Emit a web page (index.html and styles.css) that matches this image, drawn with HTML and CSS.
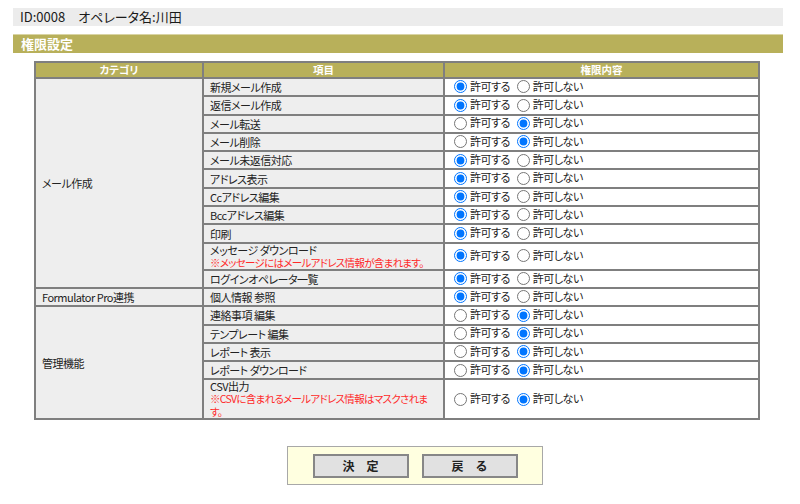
FILE: index.html
```html
<!DOCTYPE html>
<html lang="ja">
<head>
<meta charset="utf-8">
<title>権限設定</title>
<link rel="stylesheet" href="styles.css">
</head>
<body>
<div class="page">
  <div class="opbar">ID:0008　オペレータ名:川田</div>
  <h2 class="section">権限設定</h2>
  <table class="perm">
    <colgroup><col class="c-cat"><col class="c-item"><col class="c-val"></colgroup>
    <thead>
      <tr><th>カテゴリ</th><th>項目</th><th>権限内容</th></tr>
    </thead>
    <tbody>
      <tr><td class="cat" rowspan="11">メール作成</td><td class="item">新規メール作成</td>
        <td class="val"><label><input type="radio" name="r1" checked>許可する</label> <label><input type="radio" name="r1">許可しない</label></td></tr>
      <tr><td class="item">返信メール作成</td>
        <td class="val"><label><input type="radio" name="r2" checked>許可する</label> <label><input type="radio" name="r2">許可しない</label></td></tr>
      <tr><td class="item">メール転送</td>
        <td class="val"><label><input type="radio" name="r3">許可する</label> <label><input type="radio" name="r3" checked>許可しない</label></td></tr>
      <tr><td class="item">メール削除</td>
        <td class="val"><label><input type="radio" name="r4">許可する</label> <label><input type="radio" name="r4" checked>許可しない</label></td></tr>
      <tr><td class="item">メール未返信対応</td>
        <td class="val"><label><input type="radio" name="r5" checked>許可する</label> <label><input type="radio" name="r5">許可しない</label></td></tr>
      <tr><td class="item">アドレス表示</td>
        <td class="val"><label><input type="radio" name="r6" checked>許可する</label> <label><input type="radio" name="r6">許可しない</label></td></tr>
      <tr><td class="item">Ccアドレス編集</td>
        <td class="val"><label><input type="radio" name="r7" checked>許可する</label> <label><input type="radio" name="r7">許可しない</label></td></tr>
      <tr><td class="item">Bccアドレス編集</td>
        <td class="val"><label><input type="radio" name="r8" checked>許可する</label> <label><input type="radio" name="r8">許可しない</label></td></tr>
      <tr><td class="item">印刷</td>
        <td class="val"><label><input type="radio" name="r9" checked>許可する</label> <label><input type="radio" name="r9">許可しない</label></td></tr>
      <tr><td class="item">メッセージ ダウンロード<br><span class="note">※メッセージにはメールアドレス情報が含まれます。</span></td>
        <td class="val"><label><input type="radio" name="r10" checked>許可する</label> <label><input type="radio" name="r10">許可しない</label></td></tr>
      <tr><td class="item">ログインオペレータ一覧</td>
        <td class="val"><label><input type="radio" name="r11" checked>許可する</label> <label><input type="radio" name="r11">許可しない</label></td></tr>
      <tr><td class="cat">Formulator Pro連携</td><td class="item">個人情報 参照</td>
        <td class="val"><label><input type="radio" name="r12" checked>許可する</label> <label><input type="radio" name="r12">許可しない</label></td></tr>
      <tr><td class="cat" rowspan="5">管理機能</td><td class="item">連絡事項 編集</td>
        <td class="val"><label><input type="radio" name="r13">許可する</label> <label><input type="radio" name="r13" checked>許可しない</label></td></tr>
      <tr><td class="item">テンプレート 編集</td>
        <td class="val"><label><input type="radio" name="r14">許可する</label> <label><input type="radio" name="r14" checked>許可しない</label></td></tr>
      <tr><td class="item">レポート 表示</td>
        <td class="val"><label><input type="radio" name="r15">許可する</label> <label><input type="radio" name="r15" checked>許可しない</label></td></tr>
      <tr><td class="item">レポート ダウンロード</td>
        <td class="val"><label><input type="radio" name="r16">許可する</label> <label><input type="radio" name="r16" checked>許可しない</label></td></tr>
      <tr><td class="item">CSV出力<br><span class="note">※CSVに含まれるメールアドレス情報はマスクされます。</span></td>
        <td class="val"><label><input type="radio" name="r17">許可する</label> <label><input type="radio" name="r17" checked>許可しない</label></td></tr>
    </tbody>
  </table>
  <div class="actions">
    <button type="button" class="btn">決　定</button>
    <button type="button" class="btn">戻　る</button>
  </div>
</div>
</body>
</html>
```

FILE: styles.css
```css
html, body {
  margin: 0;
  padding: 0;
  background: #ffffff;
}
body {
  font-family: "Noto Sans CJK JP", "Noto Sans", sans-serif;
  font-feature-settings: "palt";
  color: #222222;
  font-size: 11px;
}
.page {
  padding: 8px 0 0 13px;
  width: 770px;
}
.opbar {
  background: #ececec;
  height: 18px;
  line-height: 18px;
  font-size: 13px;
  padding-left: 7px;
  color: #1a1a1a;
}
.section {
  margin: 8px 0 0 0;
  height: 18px;
  line-height: 18px;
  border-top: 1px solid #d9d4a4;
  background: #b8b05a;
  color: #ffffff;
  font-size: 13px;
  font-weight: bold;
  padding-left: 8px;
}
.perm {
  margin: 8px 0 0 21px;
  width: 724px;
  border-collapse: collapse;
  table-layout: fixed;
  border: 2px solid #7f7f7f;
}
.c-cat { width: 168px; }
.c-item { width: 241px; }
.c-val { width: 315px; }
.perm th {
  background: #b8b05a;
  color: #ffffff;
  font-weight: bold;
  font-size: 10.5px;
  height: 14px;
  line-height: 14px;
  padding: 0;
  border: 2px solid #7f7f7f;
  text-align: center;
}
.perm td {
  border: 2px solid #7f7f7f;
  padding: 0 6px;
  line-height: 12px;
  height: 16.3px;
  vertical-align: middle;
  text-align: left;
  letter-spacing: -0.5px;
}
.perm td.cat,
.perm td.item {
  background: #eeeeee;
}
.perm td.val {
  background: #ffffff;
  padding: 0 0 0 4px;
}
.note {
  color: #ff2a2a;
  font-size: 10.5px;
  letter-spacing: -0.7px;
}
.val label {
  white-space: nowrap;
}
.val input {
  width: 13px;
  height: 13px;
  margin: 0 3px 0 5px;
  vertical-align: middle;
  position: relative;
  top: -1px;
}
.actions {
  margin: 26px 0 0 274px;
  width: 254px;
  height: 37px;
  border: 1px solid #a8a8a8;
  background: #ffffe0;
  display: flex;
  justify-content: center;
  align-items: center;
  gap: 13px;
}
.btn {
  width: 96px;
  height: 24px;
  border: 2px solid #878787;
  background: #e1e1e1;
  font-family: "Noto Sans CJK JP", sans-serif;
  font-size: 12px;
  font-weight: bold;
  color: #222222;
  padding: 0;
  line-height: 18px;
}
```
